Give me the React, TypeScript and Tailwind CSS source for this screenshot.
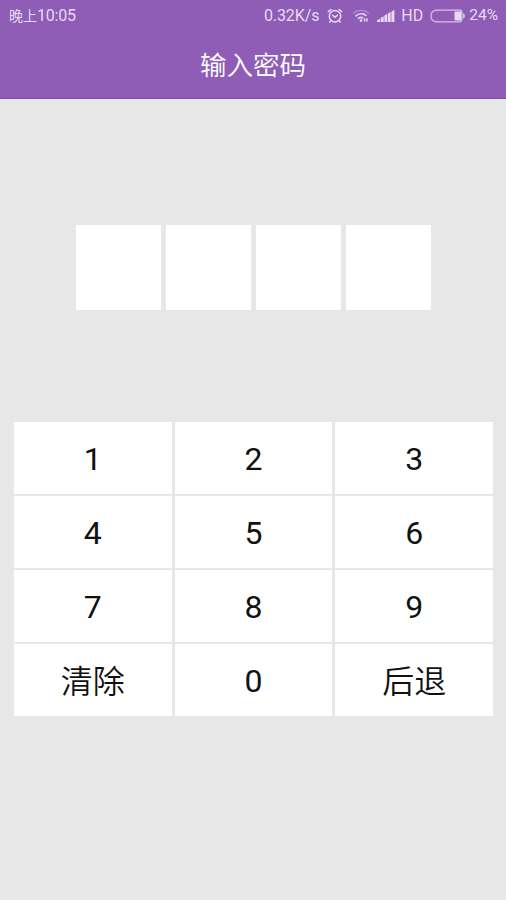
import React, { useState } from 'react';

const KEYS = ['1', '2', '3', '4', '5', '6', '7', '8', '9', '清除', '0', '后退'];

const AlarmIcon = () => (
  <svg width="16" height="16" viewBox="0 0 16 16" fill="none" stroke="currentColor" strokeWidth="1.5" strokeLinecap="round">
    <circle cx="8" cy="8.3" r="5.7" />
    <path d="M1.3 3.6 3.8 1.6M14.7 3.6 12.2 1.6M5.6 7.2 8 9.3 10.4 7.2M3.9 12.6 2.8 14.2M12.1 12.6 13.2 14.2" />
  </svg>
);

const WifiIcon = () => (
  <svg width="18" height="14" viewBox="0 0 18 14" fill="none" stroke="currentColor">
    <path d="M1 4.6C5.6.2 12.4.2 17 4.6" strokeWidth="1.2" opacity="0.4" />
    <path d="M3.4 7.3C6.8 4 11.2 4 14.4 6.9" strokeWidth="1.8" opacity="0.9" />
    <path d="M6 9.7C7.6 8.1 9.6 8.1 11 9.2" strokeWidth="1.8" />
    <circle cx="9" cy="11.6" r="1.3" fill="currentColor" stroke="none" />
    <path d="M12.6 9.3v3.2M15 12.6V9.4" strokeWidth="1.8" opacity="0.85" />
  </svg>
);

const SignalIcon = () => (
  <svg width="18" height="12" viewBox="0 0 18 12" fill="currentColor">
    <path d="M0 12v-1.6l3.2-2V12zM3.9 12V7.8l2.8-1.6V12zM7.4 12V5.6l2.8-1.5V12zM10.9 12V3.6l2.8-1.5V12zM14.4 12V1.5L17.4 0v12z" />
  </svg>
);

const BatteryIcon = () => (
  <svg width="36" height="14" viewBox="0 0 36 14" fill="none">
    <path d="M6.5 1.2H29.5Q32 1.2 32 3.7V10.3Q32 12.8 29.5 12.8H6.5Q1 12.2 1 7T6.5 1.2Z" stroke="currentColor" strokeWidth="1.2" opacity="0.8" />
    <rect x="24.5" y="2.6" width="7" height="8.8" rx="0.8" fill="currentColor" />
    <path d="M33 4.2Q35 4.7 35 7T33 9.8Z" fill="currentColor" opacity="0.75" />
  </svg>
);

const StatusBar = () => (
  <div className="flex h-[30px] items-center justify-between pt-px pr-2 pl-[9px] text-[15.5px] leading-none text-[#ead9f5]">
    <span className="flex items-center">
      <span className="text-[14px]">晚上</span>
      <span className="text-[16px] tracking-[-0.2px]">10:05</span>
    </span>
    <div className="flex items-center">
      <span className="mr-2 text-[16px] tracking-[-0.1px]">0.32K/s</span>
      <AlarmIcon />
      <span className="ml-[9px]"><WifiIcon /></span>
      <span className="ml-[7px]"><SignalIcon /></span>
      <span className="ml-1.5 text-[16px]">HD</span>
      <span className="ml-[7px]"><BatteryIcon /></span>
      <span className="ml-[3px]">24%</span>
    </div>
  </div>
);

const App: React.FC = () => {
  const [code, setCode] = useState('');

  const handleKey = (key: string) => {
    if (key === '清除') {
      setCode('');
    } else if (key === '后退') {
      setCode((prev) => prev.slice(0, -1));
    } else {
      setCode((prev) => (prev + key).slice(0, 4));
    }
  };

  return (
    <div className="flex h-[900px] w-[506px] flex-col overflow-hidden bg-[#e7e7e7] font-[Roboto,'Noto_Sans_CJK_SC',sans-serif]">
      <header className="h-[99px] shrink-0 border-b border-[#7d48a4] bg-[#8f5db5]">
        <StatusBar />
        <h1 className="flex h-[68px] items-center justify-center pt-1 text-[26.5px] font-[350] text-white">输入密码</h1>
      </header>

      {/* Entered digits */}
      <div className="mt-[126px] flex justify-center gap-[5.2px] pl-px">
        {[0, 1, 2, 3].map((i) => (
          <div key={i} className="flex h-[85px] w-[85px] items-center justify-center bg-white text-[32px] text-black">
            {code[i] ? '•' : ''}
          </div>
        ))}
      </div>

      {/* Keypad */}
      <div className="mt-[112px] ml-[14px] grid w-[479px] grid-cols-3 gap-x-[3px] gap-y-0.5">
        {KEYS.map((key) => (
          <button
            key={key}
            onClick={() => handleKey(key)}
            className="flex h-[72px] items-center justify-center bg-white pt-0.5 text-[32px] leading-none font-normal text-[#111] active:bg-gray-100"
          >
            {key.length > 1 ? <span className="pt-0.5 font-[350]">{key}</span> : key}
          </button>
        ))}
      </div>
    </div>
  );
};

export default App;
